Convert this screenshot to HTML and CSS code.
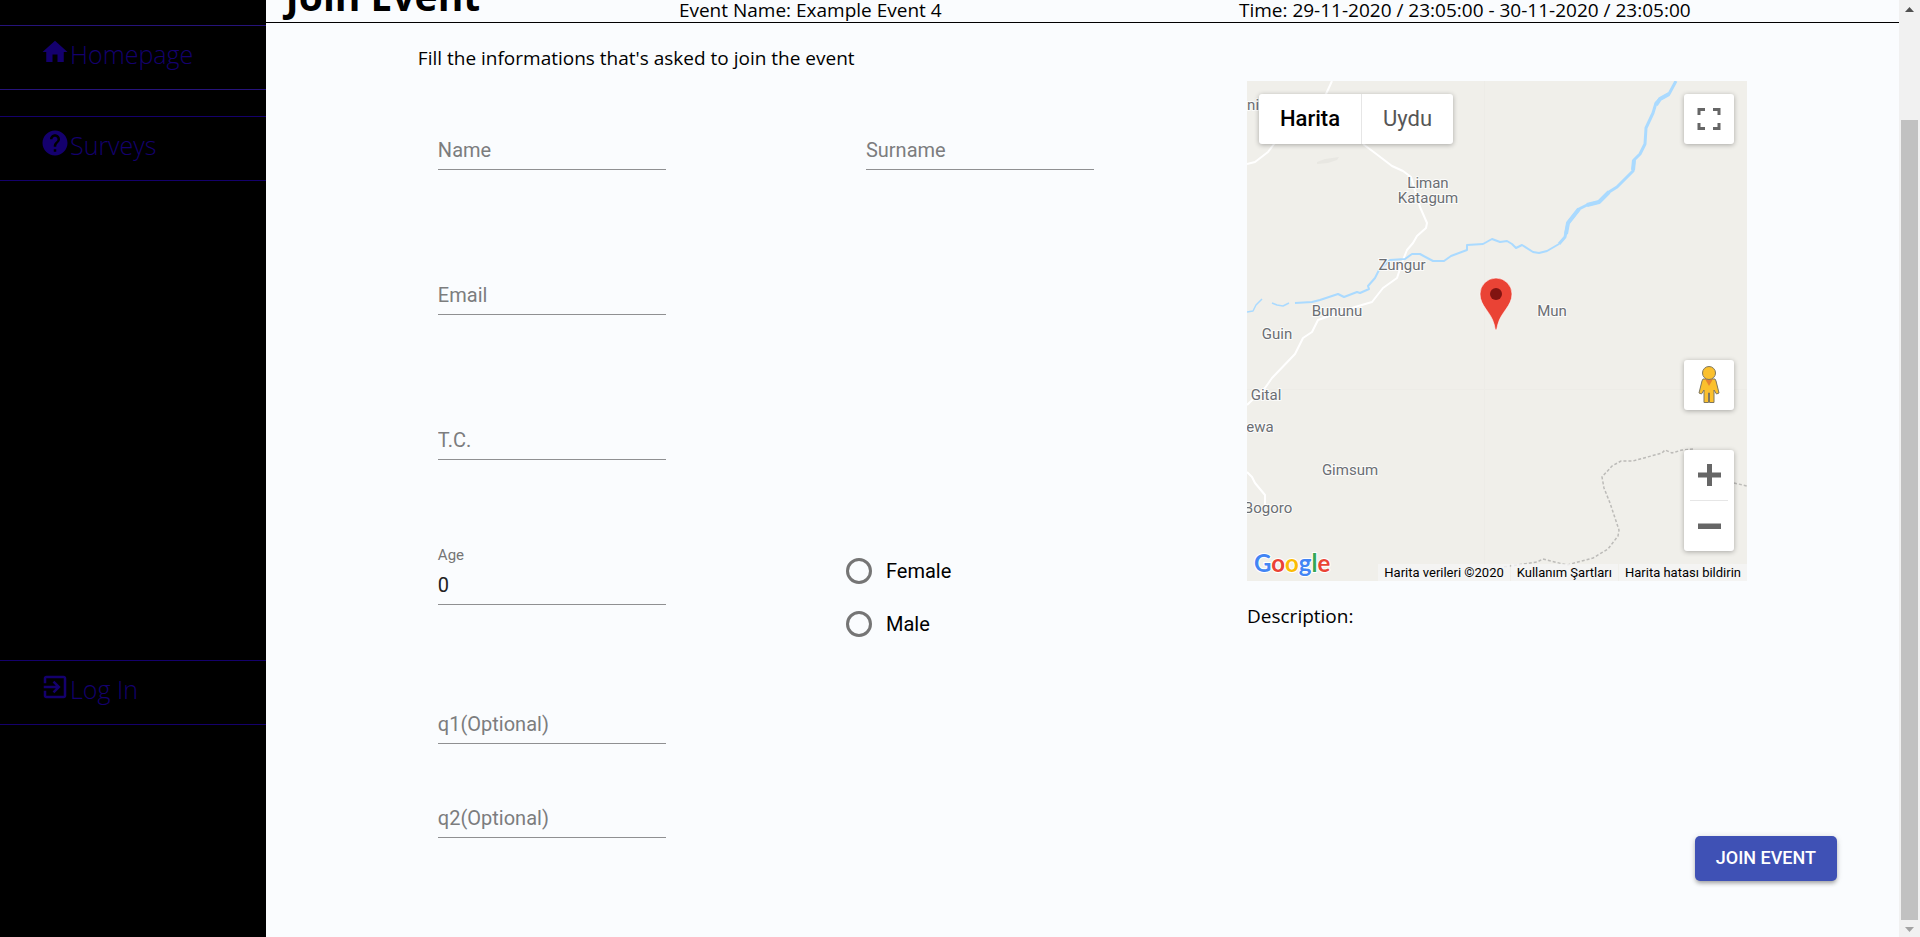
FILE: index.html
```html
<!DOCTYPE html>
<html lang="en">
<head>
<meta charset="utf-8">
<title>Join Event</title>
<link rel="stylesheet" href="styles.css">
</head>
<body>
<div class="window">
  <div class="app">
    <nav class="sidebar">
      <a class="nav-link nav-home" href="#home">
        <svg class="nav-icon" viewBox="0 0 24 24" aria-hidden="true"><path d="M10 20v-6h4v6h5v-8h3L12 3 2 12h3v8z"/></svg>
        <span>Homepage</span>
      </a>
      <a class="nav-link nav-surveys" href="#surveys">
        <svg class="nav-icon" viewBox="0 0 24 24" aria-hidden="true"><path d="M12 2C6.480 2 2 6.480 2 12s4.480 10 10 10 10-4.480 10-10S17.520 2 12 2zm1 17h-2v-2h2v2zm2.070-7.750l-.9.920C13.450 12.900 13 13.500 13 15h-2v-.5c0-1.100.450-2.100 1.170-2.830l1.240-1.260c.370-.360.590-.860.590-1.410 0-1.100-.900-2-2-2s-2 .900-2 2H8c0-2.210 1.790-4 4-4s4 1.790 4 4c0 .880-.360 1.680-.930 2.250z"/></svg>
        <span>Surveys</span>
      </a>
      <a class="nav-link nav-login" href="#login">
        <svg class="nav-icon" viewBox="0 0 24 24" aria-hidden="true"><path d="M10.090 15.590L11.500 17l5-5-5-5-1.410 1.410L12.670 11H3v2h9.670l-2.580 2.590zM19 3H5c-1.110 0-2 .900-2 2v4h2V5h14v14H5v-4H3v4c0 1.100.890 2 2 2h14c1.100 0 2-.900 2-2V5c0-1.100-.900-2-2-2z"/></svg>
        <span>Log In</span>
      </a>
    </nav>

    <main class="page">
      <header class="page-header">
        <h1 class="page-title">Join Event</h1>
        <p class="event-name">Event Name: Example Event 4</p>
        <p class="event-time">Time: 29-11-2020 / 23:05:00 - 30-11-2020 / 23:05:00</p>
      </header>

      <p class="intro">Fill the informations that's asked to join the event</p>

      <form class="workspace">
        <div class="fields">
          <div class="row row-tall">
            <div class="field"><input class="field-input" type="text" placeholder="Name" aria-label="Name"></div>
            <div class="field"><input class="field-input" type="text" placeholder="Surname" aria-label="Surname"></div>
          </div>
          <div class="row row-tall">
            <div class="field"><input class="field-input" type="email" placeholder="Email" aria-label="Email"></div>
          </div>
          <div class="row row-tall">
            <div class="field"><input class="field-input" type="text" placeholder="T.C." aria-label="T.C."></div>
          </div>
          <div class="row">
            <div class="field">
              <label class="field-label" for="age">Age</label>
              <input class="field-input" id="age" type="text" inputmode="numeric" value="0">
            </div>
            <div class="radios" role="radiogroup" aria-label="Gender">
              <label class="radio"><input class="radio-input" type="radio" name="gender" value="female">Female</label>
              <label class="radio"><input class="radio-input" type="radio" name="gender" value="male">Male</label>
            </div>
          </div>
          <div class="row">
            <div class="field"><input class="field-input" type="text" placeholder="q1(Optional)" aria-label="q1(Optional)"></div>
          </div>
          <div class="row row-last">
            <div class="field"><input class="field-input" type="text" placeholder="q2(Optional)" aria-label="q2(Optional)"></div>
          </div>
        </div>

        <div class="side">
          <div class="map">
            <svg class="map-canvas" viewBox="0 0 500 500" role="img" aria-label="Event location">
              <rect width="500" height="500" fill="#f0efea"/>
              <path d="M237.500 0V500M0 308.500H500" stroke="#edece7" fill="none"/>
              <path d="M70 81l8-3 14-2-2 3-9 3-11 1z" fill="#e8e7e2"/>
              <g fill="none" stroke="#fff" stroke-width="2" stroke-linejoin="round">
                <path d="M85 0L79 13 27 63 21 71 8 81 0 83"/>
                <path d="M116 63L128 72 145 85 156 90 164 96 173 126 180 142 179 147 170 155 166 162 160 169 156 179 150 197 136 207 125 221 108 226 71 239 65 251 56 257 48 273 25 297 18 307 0 324"/>
                <path d="M0 391L5 396 8 402 18 414V424"/>
              </g>
              <g fill="none" stroke="#aadaff" stroke-linejoin="round">
                <path stroke-width="1.500" d="M0 231L6 230 9 224 15 218M25 222L30 224 36 225 42 222"/>
                <path stroke-width="2" d="M48 222L65 221 73 219 91 213 97 216 110 211 113 212 122 208 121 205 128 197 132 189 143 179 158 178 165 173 173 173 186 180 197 180 204 175 220 169 220 164 236 163 245 158 253 161 260 160 265 163 269 167 275 164 286 171 292 172 300 170 312 163"/>
                <path stroke-width="3" d="M312 163L318 156 321 142 332 128 340 124 352 121 362 111 370 106 386 90 387 79 393 73 398 63 399 47 406 32 409 22 413 18 422 13 429 0"/>
                <path stroke-width="4" d="M319 153L321 142 332 128M340 124L352 121 362 111M386 89L387 79M409 24L413 18 422 13"/>
              </g>
              <path d="M446 368L435 369 425 372 418 369 415 372 386 380 374 380 365 385 355 396 357 407 363 422 372 449 371 455 361 468 346 477 320 484 296 478 290 481 256 486M487 402L500 405" fill="none" stroke="#bcbbb8" stroke-width="1.500" stroke-dasharray="3 2"/>
              <g class="place" text-anchor="middle">
                <text x="2" y="29">ani</text>
                <text x="181" y="107">Liman</text>
                <text x="181" y="122">Katagum</text>
                <text x="155" y="189">Zungur</text>
                <text x="90" y="235">Bununu</text>
                <text x="305" y="235">Mun</text>
                <text x="30" y="258">Guin</text>
                <text x="19" y="319">Gital</text>
                <text x="13" y="351">ewa</text>
                <text x="103" y="394">Gimsum</text>
                <text x="21" y="432">Bogoro</text>
              </g>
              <path d="M249 249C248 249 248 246 247 243C244 231 233 225 233 213A16 16 0 0 1 265 213C265 225 254 231 251 243C250 246 250 249 249 249Z" fill="#ea4335" stroke="#fff" stroke-opacity=".6"/>
              <circle cx="249" cy="213" r="6" fill="#811411"/>
              <text class="brand" x="7" y="491"><tspan fill="#4285f4">G</tspan><tspan fill="#ea4335">o</tspan><tspan fill="#fbbc05">o</tspan><tspan fill="#4285f4">g</tspan><tspan fill="#34a853">l</tspan><tspan fill="#ea4335">e</tspan></text>
            </svg>
            <div class="map-types">
              <button class="map-type map-type-on" type="button">Harita</button>
              <button class="map-type" type="button">Uydu</button>
            </div>
            <div class="map-tools">
              <button class="map-tool" type="button" aria-label="Full screen">
                <svg width="24" height="24" viewBox="0 0 24 24" fill="none" stroke="#666" stroke-width="3"><path d="M2 8V2.500H8M16 2.500H22V8M22 16V21.500H16M8 21.500H2V16"/></svg>
              </button>
              <button class="map-tool map-pegman" type="button" aria-label="Street View">
                <svg width="24" height="40" viewBox="0 0 24 40" fill="#fbc02d" stroke="#7d7660" stroke-width="1" stroke-linejoin="round">
                  <path d="M6 14H18L19 16 22 28 19.500 29 17 25V37.500H12.500V28H11.500V37.500H7V25L4.500 29 2 28 5 16Z"/>
                  <path d="M8 14H16L12 21Z" fill="#e68330" stroke="none"/>
                  <circle cx="12" cy="8" r="6.500"/>
                </svg>
              </button>
              <div class="map-zoom">
                <button class="zoom-button" type="button" aria-label="Zoom in"><svg width="24" height="24" viewBox="0 0 24 24"><path d="M1 9.500H10V1H15V9.500H24V14.500H15V23H10V14.500H1Z" fill="#666"/></svg></button>
                <button class="zoom-button" type="button" aria-label="Zoom out"><svg width="24" height="24" viewBox="0 0 24 24"><path d="M1 9.500H24V15H1Z" fill="#666"/></svg></button>
              </div>
            </div>
            <div class="map-credits">
              <span class="credit">Harita verileri ©2020</span>
              <a class="credit" href="#terms">Kullanım Şartları</a>
              <a class="credit" href="#report">Harita hatası bildirin</a>
            </div>
          </div>
          <p class="description">Description:</p>
          <button class="submit" type="submit">JOIN EVENT</button>
        </div>
      </form>
    </main>
  </div>

  <div class="scrollbar" aria-hidden="true">
    <svg class="scroll-arrow" viewBox="0 0 21 17"><path d="M6 12L10.500 7 15 12Z" fill="#505050"/></svg>
    <div class="scroll-track"><div class="scroll-thumb"></div></div>
    <svg class="scroll-arrow" viewBox="0 0 21 17"><path d="M6 7L10.500 12 15 7Z" fill="#a3a3a3"/></svg>
  </div>
</div>
</body>
</html>
```
FILE: styles.css
```css
* {
  box-sizing: border-box;
}

body {
  margin: 0;
  background: #fafcfe;
  color: #000;
  font: 19px/28px "Open Sans", "Noto Sans", sans-serif;
}

h1,
p {
  margin: 0;
}

button,
input {
  font-family: Roboto, sans-serif;
}

.window {
  display: flex;
  min-height: 100vh;
}

.app {
  display: flex;
  flex: 1;
  min-width: 0;
}

/* Sidebar */
.sidebar {
  display: flex;
  flex-direction: column;
  flex: none;
  width: 14%;
  padding-top: 25px;
  background: #000;
}

.nav-link {
  display: flex;
  height: 65px;
  padding: 11px 40px;
  border-top: 1px solid #14006b;
  border-bottom: 1px solid #14006b;
  color: #14006e;
  font-size: 25px;
  font-weight: 300;
  line-height: 34px;
  text-decoration: none;
}

.nav-home {
  border-color: #26137a;
}

.nav-surveys {
  margin-top: 26px;
}

.nav-login {
  margin-top: 479px;
}

.nav-icon {
  width: 30px;
  height: 30px;
  fill: currentColor;
}

/* Page */
.page {
  display: flex;
  flex-direction: column;
  flex: 1;
  min-width: 0;
}

/* The header is scrolled up: only its lower edge is in view. */
.page-header {
  display: grid;
  grid-template-columns: 413fr 560fr 660fr;
  grid-template-rows: 22px;
  align-items: end;
  border-bottom: 1px solid #000;
}

.page-title {
  padding-left: 20px;
  font-size: 39px;
  font-weight: 700;
  line-height: 52px;
}

.event-name,
.event-time {
  line-height: 24px;
  white-space: nowrap;
}

.intro {
  padding: 21px 152px 9px;
}

.workspace {
  display: flex;
  flex: 1;
  padding: 0 62px 56px 152px;
}

.fields {
  flex: 1;
  padding-top: 29px;
}

.row {
  display: grid;
  grid-template-columns: 428fr 401fr;
  align-items: start;
  margin-bottom: 34px;
}

.row-tall {
  margin-bottom: 85px;
}

.row-last {
  margin-bottom: 0;
}

.field {
  display: flex;
  flex-direction: column;
  justify-content: flex-end;
  width: 228px;
  height: 60px;
  margin-left: 20px;
}

.field-label {
  color: #757575;
  font: 15px/20px Roboto, sans-serif;
}

.field-input {
  width: 100%;
  height: 40px;
  padding: 0;
  border: 0;
  border-bottom: 1px solid #8f9092;
  border-radius: 0;
  background: transparent;
  color: #212121;
  font-size: 20px;
}

.field-input::placeholder {
  color: #7c7d7e;
  opacity: 1;
}

.radios {
  display: grid;
  gap: 1px;
}

.radio {
  display: flex;
  align-items: center;
  gap: 14px;
  height: 52px;
  font: 20px/28px Roboto, sans-serif;
}

.radio-input {
  appearance: none;
  width: 26px;
  height: 26px;
  margin: 0;
  border: 3px solid #757575;
  border-radius: 50%;
}

/* Map column */
.side {
  display: flex;
  flex-direction: column;
  flex: none;
}

.map {
  position: relative;
  width: 500px;
  margin-right: 90px;
  overflow: hidden;
  font-family: Roboto, sans-serif;
}

.map-canvas {
  display: block;
  width: 100%;
}

.place {
  fill: #6b6e73;
  stroke: #fff;
  stroke-width: 2px;
  stroke-opacity: .8;
  paint-order: stroke;
  font: 15px Roboto, sans-serif;
}

.brand {
  stroke: #fff;
  stroke-width: 2px;
  paint-order: stroke;
  font: 700 24px Lato, sans-serif;
}

.map-types,
.map-tool,
.map-zoom {
  border-radius: 3px;
  background: #fff;
  box-shadow: 0 1px 5px rgba(0, 0, 0, .3);
}

.map-types {
  position: absolute;
  top: 13px;
  left: 12px;
  display: flex;
  height: 50px;
}

.map-type {
  padding: 0 21px 2px;
  border: 0;
  background: transparent;
  color: #565656;
  font-size: 22px;
}

.map-type-on {
  border-right: 1px solid #e6e6e6;
  color: #000;
  font-weight: 500;
}

.map-tools {
  position: absolute;
  top: 13px;
  right: 13px;
  display: flex;
  flex-direction: column;
  width: 50px;
}

.map-tool {
  display: grid;
  place-items: center;
  height: 50px;
  padding: 0;
  border: 0;
}

.map-pegman {
  margin: 216px 0 40px;
}

.map-zoom {
  padding: 0 6px;
}

.zoom-button {
  display: grid;
  place-items: center;
  width: 100%;
  height: 50px;
  padding: 0;
  border: 0;
  background: transparent;
}

.zoom-button + .zoom-button {
  height: 51px;
  border-top: 1px solid #e6e6e6;
}

.map-credits {
  position: absolute;
  right: 0;
  bottom: 0;
  display: flex;
  gap: 1px;
}

.credit {
  padding: 0 6px;
  background: rgba(245, 245, 245, .8);
  color: #000;
  font-size: 13px;
  line-height: 17px;
  text-decoration: none;
}

.description {
  margin-top: 21px;
}

.submit {
  align-self: flex-end;
  height: 45px;
  margin-top: auto;
  padding: 0 21px 2px;
  border: 0;
  border-radius: 5px;
  background: #3f51b5;
  box-shadow: 0 3px 4px -1px rgba(0, 0, 0, .3), 0 1px 6px rgba(0, 0, 0, .15);
  color: #fff;
  font-size: 18px;
  font-weight: 500;
}

/* Scrollbar */
.scrollbar {
  display: flex;
  flex-direction: column;
  flex: none;
  width: 21px;
  background: #f1f1f1;
}

.scroll-arrow {
  width: 21px;
  height: 17px;
}

.scroll-track {
  display: flex;
  flex: 1;
  align-items: flex-end;
  padding: 0 2px;
}

.scroll-thumb {
  width: 100%;
  height: 88.6%;
  background: #c1c1c1;
}
```
